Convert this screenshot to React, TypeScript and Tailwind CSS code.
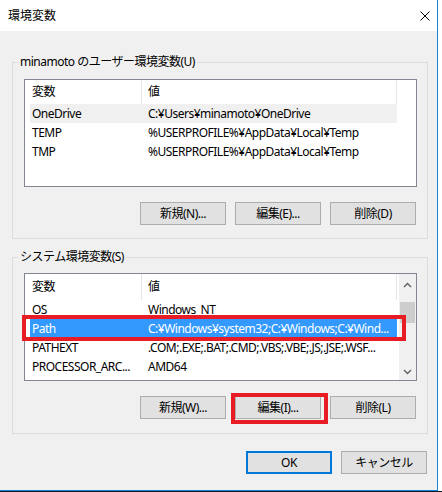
import type { ReactNode } from 'react'

type Row = { name: string; value: string; state?: 'inactive' | 'active' }

const userVars: Row[] = [
  { name: 'OneDrive', value: 'C:¥Users¥minamoto¥OneDrive', state: 'inactive' },
  { name: 'TEMP', value: '%USERPROFILE%¥AppData¥Local¥Temp' },
  { name: 'TMP', value: '%USERPROFILE%¥AppData¥Local¥Temp' },
]

const systemVars: Row[] = [
  { name: 'OS', value: 'Windows_NT' },
  { name: 'Path', value: 'C:¥Windows¥system32;C:¥Windows;C:¥Wind...', state: 'active' },
  { name: 'PATHEXT', value: '.COM;.EXE;.BAT;.CMD;.VBS;.VBE;.JS;.JSE;.WSF...' },
  { name: 'PROCESSOR_ARC...', value: 'AMD64' },
]

function Chevron({ up }: { up?: boolean }) {
  return (
    <svg width="9" height="6" viewBox="0 0 9 6">
      <polyline
        points={up ? '1,5 4.5,1.5 8,5' : '1,1 4.5,4.5 8,1'}
        fill="none"
        stroke="#606060"
        strokeWidth="1.4"
      />
    </svg>
  )
}

function ListView({ rows, headerH, scroll }: { rows: Row[]; headerH: string; scroll?: boolean }) {
  return (
    <div className="h-[108px] border border-[#828790] bg-white flex overflow-hidden">
      <div className="flex-1 flex flex-col min-w-0">
        <div className={`${headerH} flex shrink-0`}>
          <div className="w-[117px] border-r border-[#e5e5e5] pl-[7px] flex items-center">変数</div>
          <div className="w-[255px] border-r border-[#e5e5e5] pl-[6px] flex items-center">値</div>
        </div>
        {rows.map((r) => (
          <div
            key={r.name}
            className={`ml-[5px] w-[367px] h-[19px] shrink-0 flex items-center ${
              r.state === 'active'
                ? 'bg-[#3399ff] text-white'
                : r.state === 'inactive'
                ? 'bg-[#f0f0f0]'
                : ''
            }`}
          >
            <div className="w-[112px] pl-[2px] whitespace-nowrap overflow-hidden">{r.name}</div>
            <div className="flex-1 pl-[6px] whitespace-nowrap overflow-hidden">{r.value}</div>
          </div>
        ))}
      </div>
      {scroll && (
        <div className="w-[17px] bg-[#f0f0f0] flex flex-col items-center shrink-0">
          <div className="h-[17px] mt-[2px] flex items-center justify-center">
            <Chevron up />
          </div>
          <div className="w-[15px] h-[21px] mt-[9px] bg-[#cdcdcd]" />
          <div className="flex-1" />
          <div className="h-[17px] flex items-center justify-center">
            <Chevron />
          </div>
        </div>
      )}
    </div>
  )
}

function Btn({ children, focused }: { children: ReactNode; focused?: boolean }) {
  return (
    <div
      className={`w-[86px] h-[23px] flex items-center justify-center bg-[#e1e1e1] ${
        focused ? 'border-2 border-[#0078d7]' : 'border border-[#adadad]'
      }`}
    >
      {children}
    </div>
  )
}

export default function App() {
  return (
    <div className="w-[442px] h-[492px] bg-white overflow-hidden text-[12px] tracking-[-0.5px] text-black font-['Noto_Sans','Noto_Sans_CJK_JP',sans-serif]">
      <div className="w-[438px] h-[491px] border-r border-b border-[#1883d7] flex flex-col">
        {/* title bar */}
        <div className="h-[31px] shrink-0 bg-white flex items-center justify-between pl-[8px] pr-[7px]">
          <span className="tracking-normal">環境変数</span>
          <svg width="10" height="10" viewBox="0 0 10 10">
            <path d="M0.5 0.5 L9.5 9.5 M9.5 0.5 L0.5 9.5" stroke="#000" strokeWidth="1" />
          </svg>
        </div>

        <div className="flex-1 bg-[#f0f0f0] pl-[12px] pr-[9px] flex flex-col">
          {/* user variables */}
          <fieldset className="mt-[23px] border border-[#dcdcdc] pl-[11px] pr-[10px] pt-[9px] pb-[13px] min-w-0">
            <legend className="-ml-[6px] px-[2px] leading-[16px]">minamoto のユーザー環境変数(U)</legend>
            <ListView rows={userVars} headerH="h-[24px]" />
            <div className="mt-[15px] mr-[1px] flex justify-end gap-[9px]">
              <Btn>新規(N)...</Btn>
              <Btn>編集(E)...</Btn>
              <Btn>削除(D)</Btn>
            </div>
          </fieldset>

          {/* system variables */}
          <fieldset className="mt-[10px] border border-[#dcdcdc] pl-[11px] pr-[10px] pt-[8px] pb-[14px] min-w-0">
            <legend className="-ml-[6px] px-[2px] leading-[16px]">システム環境変数(S)</legend>
            <div className="relative">
              <ListView rows={systemVars} headerH="h-[26px]" scroll />
              <div className="absolute left-[-2px] top-[42px] w-[384px] h-[26px] border-4 border-[#e81c24]" />
            </div>
            <div className="mt-[15px] mr-[1px] flex justify-end gap-[9px]">
              <Btn>新規(W)...</Btn>
              <div className="relative">
                <Btn>編集(I)...</Btn>
                <div className="absolute left-[-4px] top-[-3px] w-[97px] h-[31px] border-4 border-[#e81c24]" />
              </div>
              <Btn>削除(L)</Btn>
            </div>
          </fieldset>

          <div className="mt-[17px] mr-[1px] flex justify-end gap-[9px]">
            <Btn focused>OK</Btn>
            <Btn>キャンセル</Btn>
          </div>
        </div>
      </div>
      <div className="h-[1px] bg-[#0d1b2a]" />
    </div>
  )
}
